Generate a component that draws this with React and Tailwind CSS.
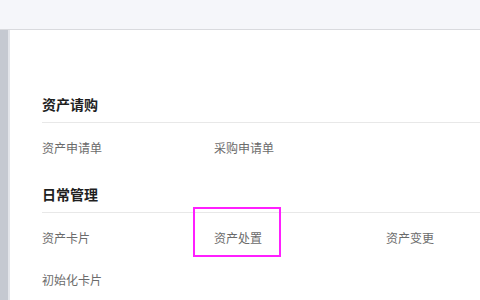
import React from 'react'

const sections = [
  { title: '资产请购', items: ['资产申请单', '采购申请单'] },
  { title: '日常管理', items: ['资产卡片', '资产处置', '资产变更', '初始化卡片'] },
]

export default function App() {
  return (
    <div className="relative w-[480px] h-[300px] overflow-hidden bg-white" style={{ fontFamily: '"Noto Sans CJK SC", "Noto Sans", sans-serif' }}>
      <div className="h-[30px] bg-[#f5f6fa] border-b border-[#d9dade]" />
      <div className="flex h-[270px]">
        <div className="w-[8px] shrink-0 bg-[#c5c9d1]" />
        <div className="w-[2px] shrink-0 bg-[#e3e5ea]" />
        <div className="flex-1 min-w-0 pl-[32px] pt-[64px]">
          {sections.map((s, i) => (
            <div key={s.title} className={i > 0 ? 'mt-[15px]' : ''}>
              <div className="h-[20px] leading-[20px] text-[14px] font-bold text-[#1f1f1f]">{s.title}</div>
              <div className="mt-[8px] h-px bg-[#e8e8e8]" />
              <div className="mt-[4px] grid grid-cols-[172px_172px_172px]">
                {s.items.map((it) => (
                  <div key={it} className="h-[42px] leading-[42px] text-[12px] text-[#6b6b6b] whitespace-nowrap">{it}</div>
                ))}
              </div>
            </div>
          ))}
        </div>
      </div>
      {/* highlight box */}
      <div className="absolute left-[193px] top-[207px] w-[88px] h-[50px] border-2 border-[#ff1fff]" />
    </div>
  )
}
